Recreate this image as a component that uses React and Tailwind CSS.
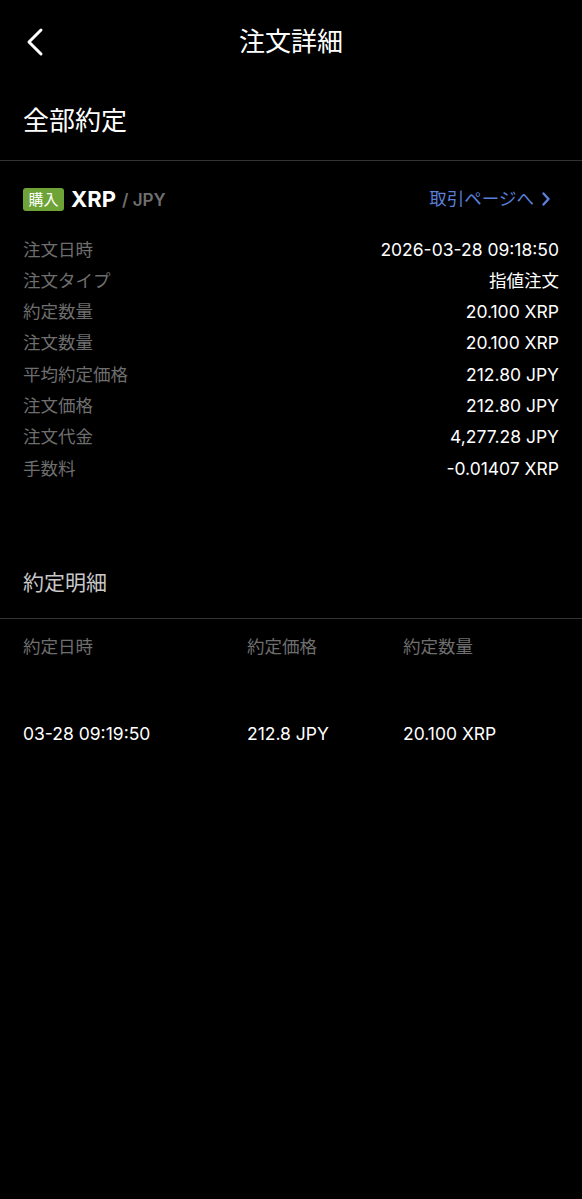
import React from "react";

const rows = [
  ["注文日時", "2026-03-28 09:18:50"],
  ["注文タイプ", "指値注文"],
  ["約定数量", "20.100 XRP"],
  ["注文数量", "20.100 XRP"],
  ["平均約定価格", "212.80 JPY"],
  ["注文価格", "212.80 JPY"],
  ["注文代金", "4,277.28 JPY"],
  ["手数料", "-0.01407 XRP"],
];

export default function App() {
  return (
    <div
      className="w-[582px] h-[1199px] bg-black text-white overflow-hidden"
      style={{ fontFamily: 'Inter, "Noto Sans CJK JP", sans-serif' }}
    >
      {/* Header */}
      <div className="relative h-[84px] flex items-center justify-center">
        <svg
          className="absolute left-[24px] top-[27px]"
          width="22"
          height="30"
          viewBox="0 0 22 30"
          fill="none"
        >
          <path d="M17 3 L5 15 L17 27" stroke="white" strokeWidth="3" strokeLinecap="round" strokeLinejoin="round" />
        </svg>
        <div className="text-[26px] leading-[34px] font-normal">注文詳細</div>
      </div>

      {/* Status */}
      <div className="h-[76px] flex items-center px-[23px]">
        <div className="text-[26px] leading-[34px] pb-[2px]">全部約定</div>
      </div>
      <div className="h-px bg-[#333333]" />

      {/* Pair row */}
      <div className="px-[23px] pt-[22px]">
        <div className="h-[32px] flex items-center justify-between">
          <div className="flex items-center">
            <span className="bg-[#6ea437] text-white rounded-[3px] h-[23px] w-[41px] flex items-center justify-center text-[15px] leading-none">
              購入
            </span>
            <span className="ml-[7px] text-[22px] font-bold leading-none">XRP</span>
            <span className="ml-[6px] text-[17px] font-semibold text-[#6f6f6f] leading-none mt-[3px]">/ JPY</span>
          </div>
          <div className="flex items-center text-[#5b7fd8] text-[17.5px] mr-[8px]">
            <span>取引ページへ</span>
            <svg className="ml-[7px]" width="10" height="16" viewBox="0 0 10 16" fill="none">
              <path d="M2.5 2.5 L7.5 8 L2.5 13.5" stroke="#5b7fd8" strokeWidth="2.4" strokeLinecap="round" strokeLinejoin="round" />
            </svg>
          </div>
        </div>

        <div className="mt-[19px]">
          {rows.map(([k, v]) => (
            <div key={k} className="h-[31.3px] flex items-center justify-between text-[17.5px]">
              <span className="text-[#6e6e6e]">{k}</span>
              <span className="text-white">{v}</span>
            </div>
          ))}
        </div>
      </div>

      {/* Fills */}
      <div className="h-[134px] flex items-end px-[23px] pb-[22px]">
        <div className="text-[21px] leading-[26px] text-[#c8c8c8]">約定明細</div>
      </div>
      <div className="h-px bg-[#333333]" />

      <div className="pl-[23px] pt-[14px] grid grid-cols-[224px_156px_1fr] text-[17.5px]">
        <div className="h-[28px] flex items-center text-[#6e6e6e]">約定日時</div>
        <div className="h-[28px] flex items-center text-[#6e6e6e]">約定価格</div>
        <div className="h-[28px] flex items-center text-[#6e6e6e]">約定数量</div>
        <div className="mt-[59px] h-[28px] flex items-center">03-28 09:19:50</div>
        <div className="mt-[59px] h-[28px] flex items-center">212.8 JPY</div>
        <div className="mt-[59px] h-[28px] flex items-center">20.100 XRP</div>
      </div>
    </div>
  );
}
